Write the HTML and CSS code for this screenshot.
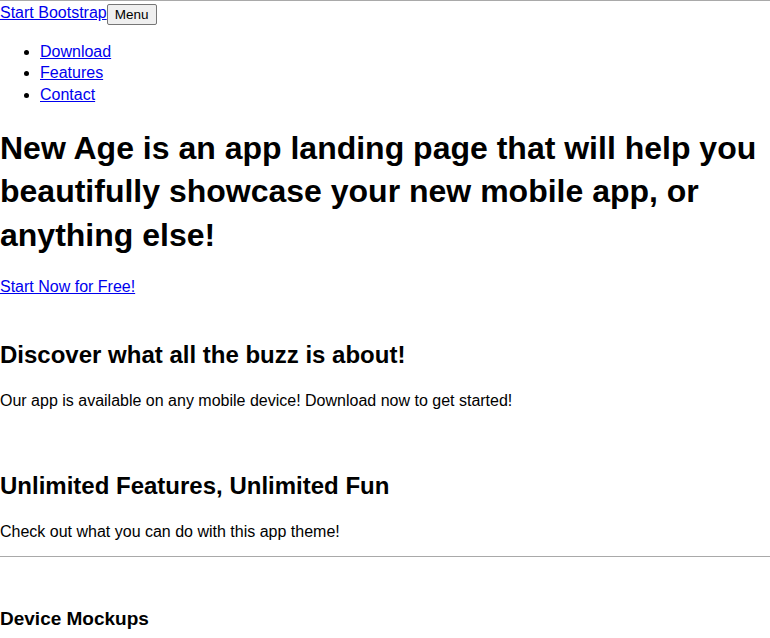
FILE: index.html
```html
<!DOCTYPE html>
<html lang="en">
<head>
<meta charset="utf-8">
<title>New Age - Start Bootstrap</title>
<link rel="stylesheet" href="styles.css">
</head>
<body>
<nav class="topnav">
  <div class="brand-row"><a class="brand" href="#page-top">Start Bootstrap</a><button class="menu-btn" type="button">Menu</button></div>
  <ul class="nav-list">
    <li><a href="#download">Download</a></li>
    <li><a href="#features">Features</a></li>
    <li><a href="#contact">Contact</a></li>
  </ul>
</nav>
<header class="masthead">
  <h1 class="hero-title">New Age is an app landing page that will help you beautifully showcase your new mobile app, or anything else!</h1>
  <a class="hero-link" href="#download">Start Now for Free!</a>
</header>
<section class="section" id="download">
  <h2 class="section-title">Discover what all the buzz is about!</h2>
  <p class="section-text">Our app is available on any mobile device! Download now to get started!</p>
</section>
<section class="section" id="features">
  <h2 class="section-title">Unlimited Features, Unlimited Fun</h2>
  <p class="section-text">Check out what you can do with this app theme!</p>
  <hr class="rule">
  <h3 class="feature-title">Device Mockups</h3>
</section>
</body>
</html>
```
FILE: styles.css
```css
html, body {
  margin: 0;
  padding: 0;
}
body {
  font-family: "Liberation Sans", Arial, sans-serif;
  font-size: 16px;
  line-height: 1.33;
  color: #000;
  background: #fff;
  border-top: 1px solid #a9a9a9;
}
a { color: #0000ee; }
.brand-row {
  display: flex;
  align-items: center;
  height: 24px;
}
.menu-btn {
  font-family: "Liberation Sans", Arial, sans-serif;
  font-size: 13.5px;
  padding: 1px 7px;
  height: 21px;
  margin-top: 2px;
  border: 1px solid #767676;
  border-radius: 2px;
  background: #efefef;
  color: #000;
}
.nav-list {
  margin: 16px 0;
  padding-left: 40px;
}
.hero-title {
  font-size: 32px;
  font-weight: bold;
  line-height: 43.5px;
  margin: 22px 0 18.5px;
}
.hero-link { display: inline-block; }
.section { padding-bottom: 4px; }
.section-title {
  font-size: 24px;
  line-height: 32px;
  margin: 42px 0 19px;
}
.section-text {
  margin: 16px 0 13px;
}
.rule {
  margin: 0;
  border: 0;
  border-top: 1px solid #a9a9a9;
}
.feature-title {
  font-size: 19px;
  margin: 49px 0 0;
}
```
